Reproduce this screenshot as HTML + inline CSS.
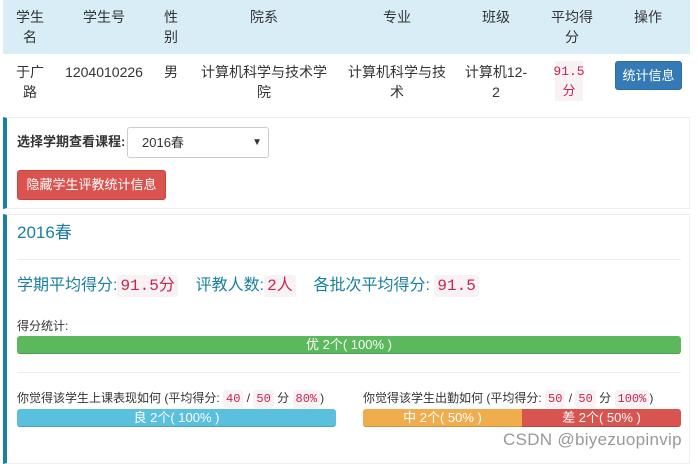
<!DOCTYPE html>
<html><head><meta charset="utf-8"><style>
body{margin:0;width:698px;height:458px;background:#fff;font-family:"Liberation Sans","Noto Sans CJK SC",sans-serif;color:#333;position:relative;overflow:hidden;font-size:14px}
.a{position:absolute}
.c{text-align:center;line-height:20px}
code{font-family:"Liberation Mono","Noto Sans CJK SC",monospace;background:#f9f2f4;color:#c7254e;border-radius:3px;padding:2px 3px}
.bar{position:absolute;height:18px;line-height:18px;color:#fff;font-size:13px;text-align:center;border-radius:3px;box-shadow:inset 0 -1px 0 rgba(0,0,0,.15)}
</style></head><body>
<div class="a" style="left:3px;top:0;width:687px;height:54px;background:#d9edf7"></div>
<div class="a c" style="left:10px;top:7px;width:40px">学生<br>名</div>
<div class="a c" style="left:64px;top:7px;width:80px">学生号</div>
<div class="a c" style="left:160px;top:7px;width:22px">性<br>别</div>
<div class="a c" style="left:204px;top:7px;width:120px">院系</div>
<div class="a c" style="left:337px;top:7px;width:120px">专业</div>
<div class="a c" style="left:466px;top:7px;width:60px">班级</div>
<div class="a c" style="left:542px;top:7px;width:60px">平均得<br>分</div>
<div class="a c" style="left:618px;top:7px;width:60px">操作</div>

<div class="a c" style="left:10px;top:62px;width:40px">于广<br>路</div>
<div class="a c" style="left:59px;top:62px;width:90px">1204010226</div>
<div class="a c" style="left:160px;top:62px;width:22px">男</div>
<div class="a c" style="left:196px;top:62px;width:136px">计算机科学与技术学<br>院</div>
<div class="a c" style="left:340px;top:62px;width:114px">计算机科学与技<br>术</div>
<div class="a c" style="left:462px;top:62px;width:68px">计算机12-<br>2</div>
<div class="a" style="left:555px;top:61px;width:28px;height:40px;background:#f9f2f4"></div>
<div class="a c" style="left:552px;top:62px;width:34px;color:#c7254e;font-family:'Liberation Mono','Noto Sans CJK SC',monospace;font-size:13px">91.5<br>分</div>
<div class="a" style="left:615px;top:61px;width:67px;height:29px;background:#337ab7;border:1px solid #2e6da4;box-sizing:border-box;border-radius:3px;color:#fff;font-size:13px;line-height:27px;text-align:center">统计信息</div>

<div class="a" style="left:3px;top:117px;width:687px;height:92px;border:1px solid #eee;border-left:4px solid #1b809e;box-sizing:border-box"></div>
<div class="a" style="left:17px;top:133px;font-weight:bold;font-size:13px;line-height:18px">选择学期查看课程:</div>
<div class="a" style="left:127px;top:127px;width:142px;height:31px;border:1px solid #ccc;border-radius:3px;box-sizing:border-box;font-size:13px;line-height:29px;padding-left:14px">2016春<span style="position:absolute;right:6px;top:0;font-size:10px">▼</span></div>
<div class="a" style="left:17px;top:170px;width:149px;height:30px;background:#d9534f;border:1px solid #d43f3a;box-sizing:border-box;border-radius:3px;color:#fff;font-size:13px;line-height:28px;text-align:center">隐藏学生评教统计信息</div>

<div class="a" style="left:3px;top:214px;width:687px;height:250px;border:1px solid #eee;border-left:4px solid #1b809e;box-sizing:border-box"></div>
<div class="a" style="left:17px;top:221px;font-size:17px;line-height:24px;color:#1b809e">2016春</div>
<div class="a" style="left:17px;top:259px;width:664px;height:1px;background:#eee"></div>
<div class="a" style="left:17px;top:275px;font-size:16px;line-height:22px;color:#1b809e;white-space:nowrap">学期平均得分:<code>91.5分</code>&nbsp;&nbsp;&nbsp; 评教人数:<code>2人</code>&nbsp;&nbsp;&nbsp; 各批次平均得分: <code>91.5</code></div>
<div class="a" style="left:17px;top:318px;font-size:12px;line-height:16px">得分统计:</div>
<div class="bar" style="left:17px;top:336px;width:664px;background:#5cb85c">优 2个( 100% )</div>
<div class="a" style="left:17px;top:372px;width:664px;height:1px;background:#eee"></div>
<div class="a" style="left:17px;top:390px;font-size:12px;line-height:16px;white-space:nowrap">你觉得该学生上课表现如何 (平均得分: <code>40</code> / <code>50</code> 分 <code>80%</code>)</div>
<div class="a" style="left:363px;top:390px;font-size:12px;line-height:16px;white-space:nowrap">你觉得该学生出勤如何 (平均得分: <code>50</code> / <code>50</code> 分 <code>100%</code>)</div>
<div class="bar" style="left:17px;top:409px;width:319px;background:#5bc0de">良 2个( 100% )</div>
<div class="bar" style="left:363px;top:409px;width:159px;background:#f0ad4e;border-radius:3px 0 0 3px">中 2个( 50% )</div>
<div class="bar" style="left:522px;top:409px;width:159px;background:#d9534f;border-radius:0 3px 3px 0">差 2个( 50% )</div>
<div class="a" style="left:503px;top:429px;font-size:17px;line-height:22px;color:#999;letter-spacing:0.3px">CSDN @biyezuopinvip</div>
</body></html>
